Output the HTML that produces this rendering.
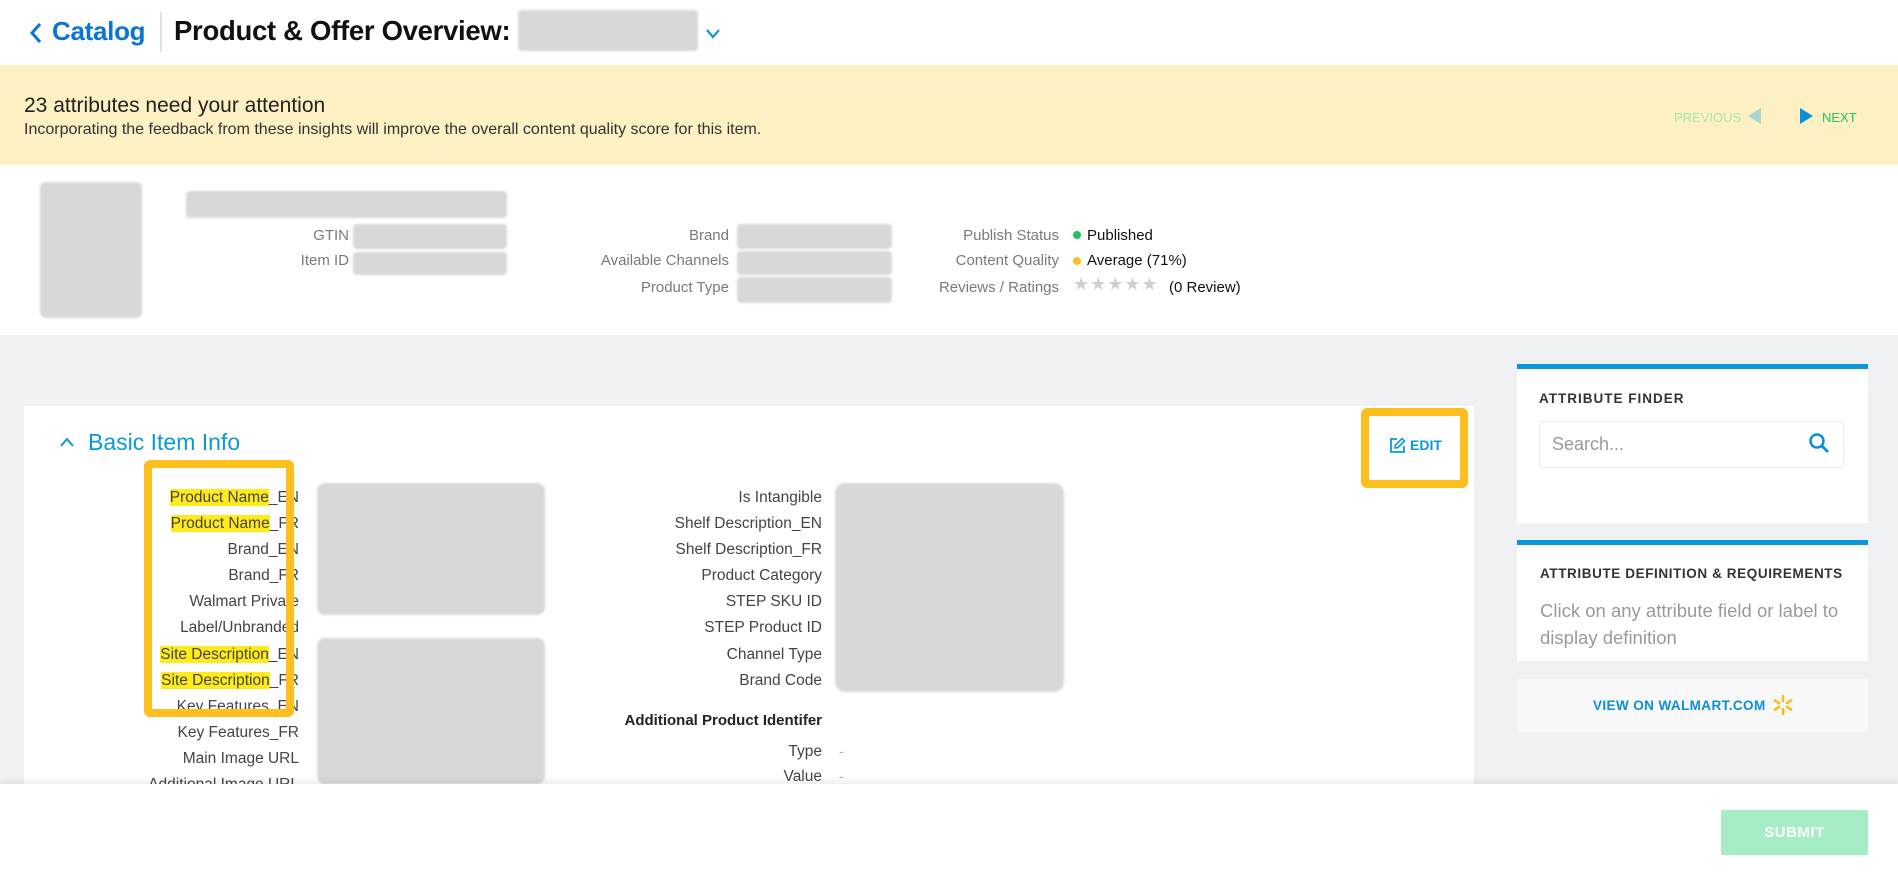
<!DOCTYPE html>
<html><head><meta charset="utf-8"><style>
*{margin:0;padding:0;box-sizing:border-box}
body{width:1898px;height:873px;overflow:hidden;position:relative;background:#f0f1f3;font-family:"Liberation Sans",sans-serif;color:#333}
.a{position:absolute;white-space:nowrap}
.blur{position:absolute;background:#d8d8d8;border-radius:4px;filter:blur(1px)}
.lbl{position:absolute;text-align:right;font-size:15px;color:#7a7a7a;line-height:18px}
.hl{background:#ffeb1a}
</style></head><body>
<!-- header -->
<div class="a" style="left:0;top:0;width:1898px;height:65px;background:#fff"></div>
<svg class="a" style="left:29px;top:22px" width="14" height="22" viewBox="0 0 14 22"><path d="M11 2 L3 11 L11 20" stroke="#0b74d4" stroke-width="3" fill="none"/></svg>
<div class="a" style="left:52px;top:16px;font-size:26px;color:#0b74d4;font-weight:bold;letter-spacing:-0.3px">Catalog</div>
<div class="a" style="left:160px;top:12px;width:2px;height:40px;background:#e2e2e2"></div>
<div class="a" style="left:174px;top:15px;font-size:27.5px;font-weight:bold;color:#111;letter-spacing:-0.3px">Product &amp; Offer Overview:</div>
<div class="blur" style="left:518px;top:10px;width:180px;height:41px"></div>
<svg class="a" style="left:705px;top:28px" width="16" height="12" viewBox="0 0 16 12"><path d="M2 2 L8 9 L14 2" stroke="#0b9ad9" stroke-width="2.2" fill="none"/></svg>
<!-- banner -->
<div class="a" style="left:0;top:65px;width:1898px;height:100px;background:#fdf0c3"></div>
<div class="a" style="left:24px;top:94px;font-size:21px;color:#222">23 attributes need your attention</div>
<div class="a" style="left:24px;top:121px;font-size:16px;color:#333">Incorporating the feedback from these insights will improve the overall content quality score for this item.</div>
<div class="a" style="left:1674px;top:110px;font-size:13px;color:#a9e5b4">PREVIOUS</div>
<svg class="a" style="left:1746px;top:107px" width="16" height="18"><path d="M15 1 L2 9 L15 17Z" fill="#a7d6d5"/></svg>
<svg class="a" style="left:1799px;top:107px" width="16" height="18"><path d="M1 1 L14 9 L1 17Z" fill="#0b8fd6"/></svg>
<div class="a" style="left:1822px;top:110px;font-size:13px;color:#22c55e">NEXT</div>
<!-- product info -->
<div class="a" style="left:0;top:165px;width:1898px;height:170px;background:#fff"></div>
<div class="blur" style="left:40px;top:182px;width:102px;height:136px;border-radius:6px"></div>
<div class="blur" style="left:186px;top:191px;width:321px;height:27px"></div>
<div class="lbl" style="left:200px;width:149px;top:227px">GTIN</div>
<div class="lbl" style="left:200px;width:149px;top:252px">Item ID</div>
<div class="blur" style="left:353px;top:224px;width:154px;height:25px"></div>
<div class="blur" style="left:353px;top:252px;width:154px;height:23px"></div>
<div class="lbl" style="left:529px;width:200px;top:227px">Brand</div>
<div class="lbl" style="left:529px;width:200px;top:252px">Available Channels</div>
<div class="lbl" style="left:529px;width:200px;top:279px">Product Type</div>
<div class="blur" style="left:737px;top:224px;width:155px;height:25px"></div>
<div class="blur" style="left:737px;top:251px;width:155px;height:24px"></div>
<div class="blur" style="left:737px;top:277px;width:155px;height:26px"></div>
<div class="lbl" style="left:859px;width:200px;top:227px">Publish Status</div>
<div class="lbl" style="left:859px;width:200px;top:252px">Content Quality</div>
<div class="lbl" style="left:859px;width:200px;top:279px">Reviews / Ratings</div>
<div class="a" style="left:1073px;top:231px;width:8px;height:8px;border-radius:50%;background:#21c35b"></div>
<div class="a" style="left:1087px;top:227px;font-size:15px;color:#111">Published</div>
<div class="a" style="left:1073px;top:257px;width:8px;height:8px;border-radius:50%;background:#fbbd21"></div>
<div class="a" style="left:1087px;top:252px;font-size:15px;color:#111">Average (71%)</div>
<div class="a" style="left:1073px;top:274px;font-size:18px;color:#cfcfcf;letter-spacing:1px">★★★★★</div>
<div class="a" style="left:1169px;top:279px;font-size:15px;color:#111">(0 Review)</div>
<!-- main card -->
<div class="a" style="left:24px;top:406px;width:1450px;height:400px;background:#fff"></div>
<svg class="a" style="left:59px;top:436px" width="16" height="12"><path d="M2 10 L8 3 L14 10" stroke="#0b9ad9" stroke-width="2" fill="none"/></svg>
<div class="a" style="left:88px;top:429px;font-size:23px;color:#0b9ad9">Basic Item Info</div>
<div class="lbl" style="left:60px;width:239px;top:485px;color:#444;font-size:15.5px;line-height:26.1px">
<span class="hl">Product Name</span>_EN<br><span class="hl">Product Name</span>_FR<br>Brand_EN<br>Brand_FR<br>Walmart Private<br>Label/Unbranded<br><span class="hl">Site Description</span>_EN<br><span class="hl">Site Description</span>_FR<br>Key Features_EN<br>Key Features_FR<br>Main Image URL<br>Additional Image URL</div>
<div class="a" style="left:144px;top:460px;width:150px;height:257px;border:8px solid #fdbf1e;border-radius:6px"></div>
<div class="blur" style="left:317px;top:483px;width:228px;height:132px;border-radius:8px"></div>
<div class="blur" style="left:317px;top:638px;width:228px;height:146px;border-radius:8px"></div>
<div class="lbl" style="left:560px;width:262px;top:485px;color:#444;font-size:15.5px;line-height:26.1px">Is Intangible<br>Shelf Description_EN<br>Shelf Description_FR<br>Product Category<br>STEP SKU ID<br>STEP Product ID<br>Channel Type<br>Brand Code</div>
<div class="blur" style="left:835px;top:483px;width:229px;height:209px;border-radius:10px"></div>
<div class="a" style="left:560px;width:262px;top:712px;text-align:right;font-size:15px;font-weight:bold;color:#222">Additional Product Identifer</div>
<div class="lbl" style="left:560px;width:262px;top:739px;color:#444;font-size:15.5px;line-height:25px">Type<br>Value</div>
<div class="a" style="left:839px;top:739px;font-size:14px;color:#aaa;line-height:25px">-<br>-</div>
<div class="a" style="left:1361px;top:408px;width:107px;height:80px;border:8px solid #fdbf1e;border-radius:6px"></div>
<svg class="a" style="left:1389px;top:437px" width="17" height="17" viewBox="0 0 17 17"><path d="M8 2 H2 V15 H15 V9" stroke="#0b9ad9" stroke-width="1.8" fill="none"/><path d="M6 11 L6.5 8 L13 1.5 L15.5 4 L9 10.5Z" stroke="#0b9ad9" stroke-width="1.6" fill="none"/></svg>
<div class="a" style="left:1410px;top:437px;font-size:14px;font-weight:bold;color:#0b9ad9">EDIT</div>
<!-- sidebar -->
<div class="a" style="left:1517px;top:364px;width:351px;height:159px;background:#fff;border-top:5px solid #0a98dc"></div>
<div class="a" style="left:1539px;top:391px;font-size:13.5px;font-weight:bold;color:#333;letter-spacing:1px">ATTRIBUTE FINDER</div>
<div class="a" style="left:1539px;top:421px;width:305px;height:47px;border:1.5px solid #ececec;background:#fff"></div>
<div class="a" style="left:1552px;top:434px;font-size:18px;color:#999">Search...</div>
<svg class="a" style="left:1808px;top:432px" width="22" height="22" viewBox="0 0 22 22"><circle cx="9" cy="9" r="6.5" stroke="#0b8fd6" stroke-width="2.5" fill="none"/><path d="M14 14 L20 20" stroke="#0b8fd6" stroke-width="2.8"/></svg>
<div class="a" style="left:1517px;top:540px;width:351px;height:121px;background:#fff;border-top:5px solid #0a98dc"></div>
<div class="a" style="left:1540px;top:566px;font-size:13.5px;font-weight:bold;color:#333;letter-spacing:0.6px">ATTRIBUTE DEFINITION &amp; REQUIREMENTS</div>
<div class="a" style="left:1540px;top:597px;font-size:18.5px;color:#9a9a9a;line-height:27px">Click on any attribute field or label to<br>display definition</div>
<div class="a" style="left:1517px;top:679px;width:351px;height:53px;background:#f8f8f9"></div>
<div class="a" style="left:1593px;top:698px;font-size:13.5px;font-weight:bold;color:#0b8fd6;letter-spacing:0.4px">VIEW ON WALMART.COM</div>
<svg class="a" style="left:1772px;top:694px" width="22" height="22" viewBox="0 0 22 22"><g stroke="#fdbb18" stroke-width="2.6" stroke-linecap="round"><path d="M11 2V7"/><path d="M11 15V20"/><path d="M3 6.5L7 9"/><path d="M19 6.5L15 9"/><path d="M3 15.5L7 13"/><path d="M19 15.5L15 13"/></g></svg>
<!-- footer -->
<div class="a" style="left:0;top:784px;width:1898px;height:89px;background:#fff;box-shadow:0 -3px 6px rgba(0,0,0,0.08)"></div>
<div class="a" style="left:1721px;top:810px;width:147px;height:45px;background:#a6ecc4;border-radius:2px;color:#fff;font-weight:bold;font-size:15px;text-align:center;line-height:45px;letter-spacing:0.5px">SUBMIT</div>
</body></html>
